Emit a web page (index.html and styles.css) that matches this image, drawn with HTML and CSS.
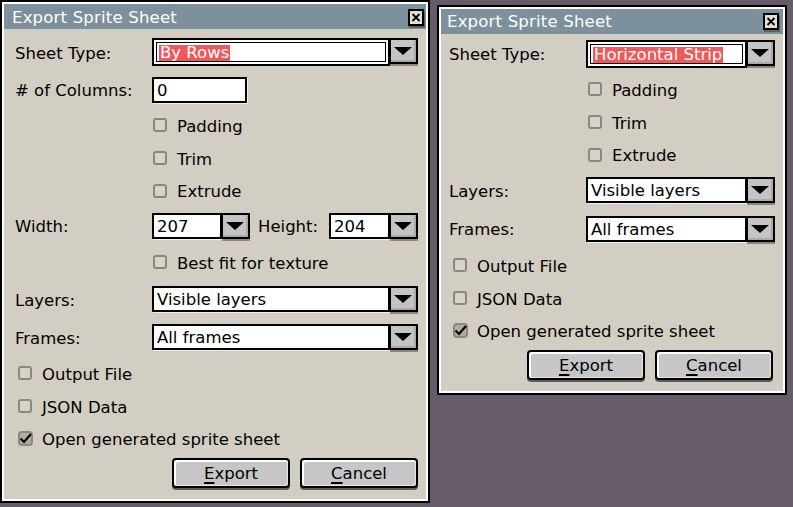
FILE: index.html
```html
<!DOCTYPE html>
<html>
<head>
<meta charset="utf-8">
<title>Export Sprite Sheet</title>
<link rel="stylesheet" href="styles.css">
</head>
<body>
  <section class="dialog dlg-a">
    <header class="titlebar">
      <span class="title">Export Sprite Sheet</span>
      <span class="close"><svg width="17" height="19" viewBox="0 0 17 19"><rect x="1" y="2" width="16" height="17" fill="#56626a"/><rect x="0" y="0" width="16" height="17" fill="#000"/><rect x="2" y="2" width="12" height="13" fill="#e4dfd4"/><path d="M4.5 5 L11.5 12 M11.5 5 L4.5 12" stroke="#000" stroke-width="1.8"/></svg></span>
    </header>
    <div class="body form-a">
      <div class="label">Sheet Type:</div>
      <div class="combo focus"><div class="field"><span class="sel">By Rows</span></div><div class="drop"><i class="tri"></i></div></div>

      <div class="label"># of Columns:</div>
      <div class="cell"><div class="field entry">0</div></div>

      <div class="check in-col"><span class="cb"></span><span class="txt">Padding</span></div>
      <div class="check in-col"><span class="cb"></span><span class="txt">Trim</span></div>
      <div class="check in-col"><span class="cb"></span><span class="txt">Extrude</span></div>

      <div class="label">Width:</div>
      <div class="pair">
        <div class="combo w-small"><div class="field">207</div><div class="drop"><i class="tri"></i></div></div>
        <span class="label-h">Height:</span>
        <div class="combo h-small"><div class="field">204</div><div class="drop"><i class="tri"></i></div></div>
      </div>

      <div class="check in-col"><span class="cb"></span><span class="txt">Best fit for texture</span></div>

      <div class="label">Layers:</div>
      <div class="combo"><div class="field">Visible layers</div><div class="drop"><i class="tri"></i></div></div>

      <div class="label">Frames:</div>
      <div class="combo"><div class="field">All frames</div><div class="drop"><i class="tri"></i></div></div>

      <div class="check full"><span class="cb"></span><span class="txt">Output File</span></div>
      <div class="check full"><span class="cb"></span><span class="txt">JSON Data</span></div>
      <div class="check full"><span class="cb checked"><svg width="15" height="15" viewBox="0 0 15 15"><rect x="1" y="1" width="13" height="13" rx="3" fill="#b3aea5" stroke="#8c877f" stroke-width="2"/><path d="M2.5 7.5 L6 11 L13 3" fill="none" stroke="#000" stroke-width="2.2"/></svg></span><span class="txt">Open generated sprite sheet</span></div>

      <div class="buttons"><button class="btn"><u>E</u>xport</button><button class="btn"><u>C</u>ancel</button></div>
    </div>
  </section>

  <section class="dialog dlg-b">
    <header class="titlebar">
      <span class="title">Export Sprite Sheet</span>
      <span class="close"><svg width="17" height="19" viewBox="0 0 17 19"><rect x="1" y="2" width="16" height="17" fill="#56626a"/><rect x="0" y="0" width="16" height="17" fill="#000"/><rect x="2" y="2" width="12" height="13" fill="#e4dfd4"/><path d="M4.5 5 L11.5 12 M11.5 5 L4.5 12" stroke="#000" stroke-width="1.8"/></svg></span>
    </header>
    <div class="body form-b">
      <div class="label">Sheet Type:</div>
      <div class="combo focus"><div class="field"><span class="sel">Horizontal Strip</span></div><div class="drop"><i class="tri"></i></div></div>

      <div class="check in-col"><span class="cb"></span><span class="txt">Padding</span></div>
      <div class="check in-col"><span class="cb"></span><span class="txt">Trim</span></div>
      <div class="check in-col"><span class="cb"></span><span class="txt">Extrude</span></div>

      <div class="label">Layers:</div>
      <div class="combo"><div class="field">Visible layers</div><div class="drop"><i class="tri"></i></div></div>

      <div class="label">Frames:</div>
      <div class="combo"><div class="field">All frames</div><div class="drop"><i class="tri"></i></div></div>

      <div class="check full"><span class="cb"></span><span class="txt">Output File</span></div>
      <div class="check full"><span class="cb"></span><span class="txt">JSON Data</span></div>
      <div class="check full"><span class="cb checked"><svg width="15" height="15" viewBox="0 0 15 15"><rect x="1" y="1" width="13" height="13" rx="3" fill="#b3aea5" stroke="#8c877f" stroke-width="2"/><path d="M2.5 7.5 L6 11 L13 3" fill="none" stroke="#000" stroke-width="2.2"/></svg></span><span class="txt">Open generated sprite sheet</span></div>

      <div class="buttons"><button class="btn"><u>E</u>xport</button><button class="btn"><u>C</u>ancel</button></div>
    </div>
  </section>
</body>
</html>
```

FILE: styles.css
```css
* { box-sizing: border-box; }

html, body { margin: 0; padding: 0; }

body {
  width: 793px;
  height: 507px;
  position: relative;
  overflow: hidden;
  background: #665b68;
  font-family: "DejaVu Sans", "Liberation Sans", sans-serif;
  font-size: 16.5px;
  color: #000;
}

.dialog {
  position: absolute;
  border: 2px solid #000;
  background: #fff;
  padding: 2px;
  display: flex;
  flex-direction: column;
}

.dlg-a { left: 0; top: 0; width: 430px; height: 503px; }
.dlg-b { left: 437px; top: 5px; width: 350px; height: 390px; }

.titlebar {
  flex: none;
  height: 25px;
  background: #7c919b;
  color: #fff;
  display: flex;
  align-items: center;
  padding: 2px 1px 0 8px;
}
.dlg-b .titlebar { padding-left: 6px; padding-right: 3px; padding-top: 0; }

.title { flex: 1; letter-spacing: 0.2px; line-height: 20px; }

.close { display: block; width: 17px; height: 19px; margin-top: 1px; }
.close svg { display: block; }

.body {
  flex: 1;
  background: #d3cec3;
  display: grid;
  grid-template-columns: 137px 1fr;
  align-items: center;
}

.form-a {
  padding: 4px 8px 0 11px;
  grid-template-rows: 38px 37px 34px 32px 33px 37px 36px 38px 38px 34px 32px 33px 36px;
}

.form-b {
  padding: 1px 8px 0 8px;
  grid-template-rows: 37px 34px 32px 33px 38px 39px 34px 32px 33px 36px;
}

.label, .label-h { white-space: nowrap; line-height: 20px; padding-top: 3px; }

.combo {
  display: flex;
  align-items: flex-start;
  height: 26px;
}
.combo.focus { height: 28px; }

.field {
  flex: 1;
  height: 26px;
  background: #fff;
  border: 2px solid #000;
  display: flex;
  align-items: center;
  padding: 2px 0 0 3px;
  white-space: nowrap;
  overflow: hidden;
  line-height: 20px;
  box-shadow: 1px 1px 0 #f2efe8;
}

.combo.focus .field {
  height: 28px;
  box-shadow: inset 0 0 0 2px #fff, inset 0 0 0 3px #000;
  padding-left: 5px;
}

.cell { display: flex; }
.entry { flex: none; width: 95px; }

.sel {
  background: #ef5959;
  color: #fff;
  line-height: 16px;
  padding: 0 1px;
}

.drop {
  flex: none;
  width: 28px;
  height: 26px;
  background: #c4c4c4;
  border: 2px solid #000;
  border-left-width: 1px;
  display: flex;
  align-items: center;
  justify-content: center;
  box-shadow: inset -2px -2px 0 #a9a9a9, 0 2px 0 #8d8579;
}

.tri {
  display: block;
  width: 0;
  height: 0;
  border-left: 9px solid transparent;
  border-right: 9px solid transparent;
  border-top: 8px solid #000;
  margin-left: -1px;
}

.pair { display: flex; align-items: center; }
.w-small { width: 98px; }
.label-h { margin-left: 8px; }
.h-small { width: 89px; margin-left: auto; }

.check {
  display: flex;
  align-items: center;
  gap: 10px;
  white-space: nowrap;
  line-height: 20px;
}
.check .txt { padding-top: 3px; }
.check.in-col { grid-column: 2; padding-left: 1px; }
.form-b .check.in-col { padding-left: 2px; }
.check.full { grid-column: 1 / -1; padding-left: 3px; }
.form-b .check.full { padding-left: 4px; }

.cb {
  flex: none;
  width: 14px;
  height: 14px;
  border: 2px solid #8c877f;
  border-radius: 3px;
  background: #d8d3c9;
}
.cb.checked {
  width: 15px;
  height: 15px;
  border: 0;
  background: none;
  margin-right: -1px;
}
.cb.checked svg { display: block; }

.buttons {
  grid-column: 1 / -1;
  display: flex;
  justify-content: flex-end;
  gap: 10px;
}
.form-b .buttons { margin-right: 2px; }

.btn {
  width: 118px;
  height: 30px;
  border: 2px solid #000;
  border-radius: 4px;
  background: #c6c6c6;
  font: inherit;
  color: #000;
  padding: 2px 0 0;
  line-height: 20px;
  box-shadow: inset 2px 2px 0 #fff, inset -1px -1px 0 #e6e6e6, 0 2px 0 #5e5a55;
}
.btn u { text-decoration-thickness: 2px; text-underline-offset: 3px; }
```
